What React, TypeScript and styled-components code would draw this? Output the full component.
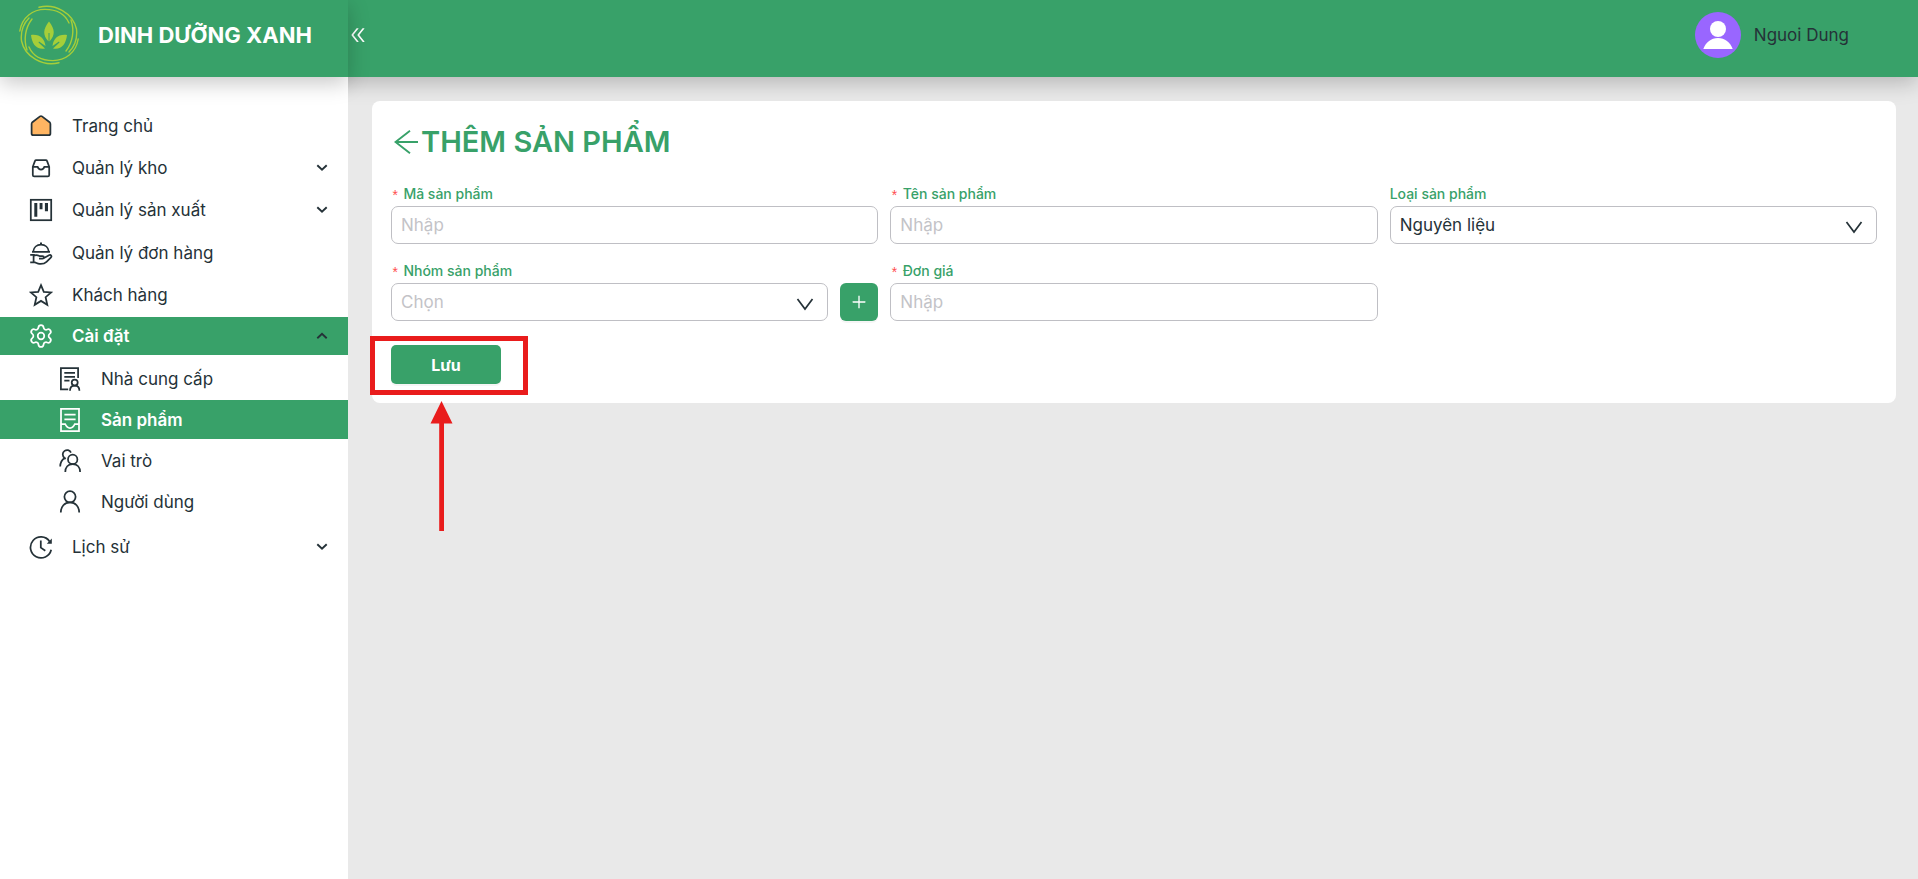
import React, { useState } from "react";
import styled, { createGlobalStyle } from "styled-components";
import { AiOutlineDoubleLeft, AiOutlinePlus } from "react-icons/ai";
import { Settings } from "lucide-react";

const green = "#38a169";
const ink = "#253238";

const GlobalStyle = createGlobalStyle`
  *, *::before, *::after { box-sizing: border-box; }
  body {
    margin: 0;
    background: #e9e9e9;
    color: ${ink};
    font-family: Inter, "Noto Sans", sans-serif;
    font-size: 17px;
    line-height: 24px;
  }
  button, input, select { font: inherit; color: inherit; }
`;

const headerShadow = "0 6px 20px 0 rgba(0, 0, 0, 0.22)";

const Shell = styled.div`
  display: grid;
  grid-template-columns: 348px minmax(0, 1fr);
  grid-template-rows: 77px 1fr;
  min-height: 100vh;
  overflow: hidden;
`;

const Brand = styled.div`
  grid-area: 1 / 1;
  z-index: 3;
  display: flex;
  align-items: center;
  gap: 19px;
  padding: 0 0 7px 19px;
  background: ${green};
  box-shadow: ${headerShadow};
`;

const BrandName = styled.span`
  color: #fff;
  font-size: 22px;
  font-weight: 700;
  white-space: nowrap;
`;

const TopBar = styled.header`
  grid-area: 1 / 1 / 2 / 3;
  z-index: 0;
  display: flex;
  align-items: center;
  justify-content: space-between;
  padding: 0 69px 7px 348px;
  background: ${green};
  box-shadow: ${headerShadow};
`;

const CollapseButton = styled.button`
  display: flex;
  padding: 0;
  border: 0;
  background: none;
  color: #fff;
  cursor: pointer;
`;

const Account = styled.button`
  display: flex;
  align-items: center;
  gap: 13px;
  padding: 0;
  border: 0;
  background: none;
  cursor: pointer;
`;

const Sidebar = styled.nav`
  grid-area: 2 / 1;
  z-index: 2;
  padding-top: 29px;
  background: #fff;
`;

const Menu = styled.ul`
  display: flex;
  flex-direction: column;
  gap: 3px;
  margin: 0;
  padding: 0;
  list-style: none;
`;

const SubMenu = styled(Menu)`
  gap: 2px;
  padding: 4px 0 3px;
`;

const MenuLink = styled.a<{ $active?: boolean; $tall?: boolean }>`
  display: flex;
  align-items: center;
  gap: 19px;
  height: ${(p) => (p.$tall ? 40 : 38)}px;
  padding: 0 20px 0 29px;
  background: ${(p) => (p.$active ? green : "transparent")};
  color: ${(p) => (p.$active ? "#fff" : ink)};
  font-weight: ${(p) => (p.$active ? 600 : 400)};
  text-decoration: none;
`;

const SubLink = styled(MenuLink)`
  height: 39px;
  padding-left: 58px;
`;

const MenuText = styled.span`
  flex: 1;
`;

const Main = styled.main`
  grid-area: 2 / 2;
  z-index: 1;
  padding: 24px 22px 24px 24px;
`;

const Card = styled.section`
  padding: 19px;
  border-radius: 8px;
  background: #fff;
`;

const TitleRow = styled.div`
  display: flex;
  align-items: center;
  gap: 3px;
  height: 44px;
  padding-left: 3px;
  color: ${green};
`;

const BackLink = styled.a`
  display: flex;
  color: inherit;
`;

const Title = styled.h1`
  margin: 0;
  font-size: 29px;
  font-weight: 600;
  line-height: 44px;
`;

const Fields = styled.div`
  display: grid;
  grid-template-columns: repeat(3, minmax(0, 1fr));
  align-items: start;
  gap: 15px 12px;
  margin: 18px 0 24px;
`;

const Label = styled.label<{ $required?: boolean }>`
  display: block;
  height: 24px;
  color: ${green};
  font-size: 14px;
  font-weight: 500;
  line-height: 24px;

  &::before {
    content: ${(p) => (p.$required ? '"*"' : "none")};
    margin-right: 4px;
    color: #ff4d4f;
    font-family: "Liberation Mono", monospace;
    font-weight: 400;
    line-height: 14px;
    vertical-align: -2px;
  }
`;

const TextInput = styled.input`
  display: block;
  width: 100%;
  height: 38px;
  padding: 0 9px;
  border: 1px solid #bfbfc4;
  border-radius: 7px;
  background: #fff;
  outline: none;

  &::placeholder {
    color: #c3c3c7;
    opacity: 1;
  }
`;

const SelectBox = styled.div`
  position: relative;
  flex: 1;

  svg {
    position: absolute;
    top: 15px;
    right: 14px;
    pointer-events: none;
  }
`;

const Select = styled.select<{ $empty?: boolean }>`
  display: block;
  width: 100%;
  height: 38px;
  padding: 0 40px 0 9px;
  border: 1px solid #bfbfc4;
  border-radius: 7px;
  background: #fff;
  color: ${(p) => (p.$empty ? "#c3c3c7" : ink)};
  appearance: none;
  outline: none;
`;

const Group = styled.div`
  display: flex;
  gap: 12px;
`;

const AddButton = styled.button`
  display: flex;
  align-items: center;
  justify-content: center;
  width: 38px;
  height: 38px;
  padding: 0;
  border: 0;
  border-radius: 6px;
  background: ${green};
  box-shadow: 0 2px 0 rgba(0, 0, 0, 0.04);
  color: #fff;
  cursor: pointer;
`;

const Actions = styled.div`
  position: relative;
  display: flex;
`;

const SaveButton = styled.button`
  width: 110px;
  height: 39px;
  padding: 0;
  border: 0;
  border-radius: 5px;
  background: ${green};
  box-shadow: 0 2px 0 rgba(0, 0, 0, 0.04);
  color: #fff;
  font-size: 16px;
  font-weight: 700;
  cursor: pointer;
`;

const Highlight = styled.div`
  position: absolute;
  top: -9px;
  left: -21px;
  width: 158px;
  height: 59px;
  border: 5px solid #e91c1c;
  pointer-events: none;
`;

const Pointer = styled.svg`
  position: absolute;
  top: 56px;
  left: 39px;
  pointer-events: none;
`;

const Stroke = ({ children }: { children: React.ReactNode }) => (
  <svg width="24" height="24" viewBox="0 0 24 24" fill="none" stroke="currentColor" strokeWidth="1.75" aria-hidden="true">
    {children}
  </svg>
);

const HomeIcon = () => (
  <Stroke>
    <path d="M11 2.4 3.4 8.2Q2.6 9 2.6 10V19.5Q2.6 21.2 4.3 21.2H19.7Q21.4 21.2 21.4 19.5V10Q21.4 9 20.6 8.2L13 2.4Q12 1.7 11 2.4Z" fill="#ffb562" />
  </Stroke>
);

const InboxIcon = () => (
  <Stroke>
    <path d="M3.8 10.8 6 4.9Q6.3 4 7.2 4H16.8Q17.7 4 18 4.9L20.2 10.8V19Q20.2 20.4 18.8 20.4H5.2Q3.8 20.4 3.8 19ZM3.8 10.8H8.6Q9.4 13.6 12 13.6T15.4 10.8H20.2" />
  </Stroke>
);

const BoardIcon = () => (
  <Stroke>
    <rect x="1.8" y="1.8" width="20.4" height="20.4" />
    <path d="M5.3 5H8.3V18.7H5.3ZM10.6 5H13.5V11.3H10.6ZM15.9 5H19V13.3H15.9Z" fill="currentColor" stroke="none" />
  </Stroke>
);

const ServeIcon = () => (
  <Stroke>
    <path d="M3 10.9H21M4.2 10.6C4.6 6.4 7.8 3.7 12 3.7S19.4 6.4 19.8 10.6M11 2.3H13" />
    <path d="M1.2 13.9H4.6V21.4H1.2M4.6 14.8C7 13.6 8.8 14.2 10.5 15H13.5C15.4 15 15.4 17.6 13.5 17.6H10M15 17 20 14.2C21.8 13.3 23.3 15.1 21.8 16.6L17.5 20.8C15.5 22.8 13 23.1 10.5 22.9C8 22.7 7 21.4 4.6 21.2" />
  </Stroke>
);

const StarIcon = () => (
  <Stroke>
    <path d="M12 2.2 14.8 8.9 22.2 9.4 16.6 14.2 18.3 21.8 12 17.9 5.7 21.8 7.4 14.2 1.8 9.4 9.2 8.9Z" />
  </Stroke>
);

const SupplierIcon = () => (
  <Stroke>
    <path d="M10.2 22.3H2.9V1.2H20.1V11M6.3 5.8H17M6.3 9.8H17M6.3 13.7H11.5" />
    <circle cx="16.7" cy="15.6" r="3" />
    <path d="M12 23.8C12 20.5 13.8 18.7 16.7 18.7S21.4 20.5 21.4 23.8" />
  </Stroke>
);

const ProductIcon = () => (
  <Stroke>
    <path d="M3 .9H21V23.1H3ZM6.4 6.6H17.6M6.4 11.3H17.6M3 16H7.2Q9 20 12 20T16.8 16H21" />
  </Stroke>
);

const RolesIcon = () => (
  <Stroke>
    <circle cx="14.7" cy="10.4" r="4.7" />
    <path d="M7.3 23C7.3 18.3 10 15.1 14.7 15.1S22.1 18.3 22.1 23M13 3.6C11.7 .9 8.7 .4 6.6 1.9C4 3.8 4.3 7.2 6.6 9.1C4 10.8 2.3 13 2.2 17.6M6.6 9.1 7.8 9.8" />
  </Stroke>
);

const UserIcon = () => (
  <Stroke>
    <circle cx="12" cy="6.8" r="5.6" />
    <path d="M2.8 22.6C2.8 16.5 6.5 12.4 12 12.4S21.2 16.5 21.2 22.6" />
  </Stroke>
);

const HistoryIcon = () => (
  <Stroke>
    <path d="M20.6 6.4A10.5 10.5 0 1 0 22.2 14.8M11.8 5.6V12.6L16.3 15.8" />
    <path d="M22.8 3.5V8.8H17.8Z" fill="currentColor" stroke="none" />
  </Stroke>
);

const Caret = ({ up }: { up?: boolean }) => (
  <svg width="12" height="8" viewBox="0 0 12 8" fill="none" stroke={ink} strokeWidth="1.9" aria-hidden="true">
    <path d={up ? "M1.3 6.2 6 1.7 10.7 6.2" : "M1.3 1.2 6 5.7 10.7 1.2"} />
  </svg>
);

const SelectArrow = () => (
  <svg width="18" height="13" viewBox="0 0 18 13" fill="none" stroke={ink} strokeWidth="1.7" aria-hidden="true">
    <path d="M1.5 1 9 11 16.5 1" />
  </svg>
);

const BackArrow = () => (
  <svg width="24" height="24" viewBox="0 0 24 24" fill="none" stroke="currentColor" strokeWidth="1.9" aria-hidden="true">
    <path d="M16 .8 1.5 12 16 23.2M1.5 12H24" />
  </svg>
);

const Logo = () => (
  <svg width="60" height="62" viewBox="0 0 60 62" fill="none" stroke="#a6ce39" aria-hidden="true">
    <g strokeWidth="1.4" strokeLinecap="round">
      <path d="M.8 27C3 13 14 5.400 26 5.400C37 5.400 46 10 50 19" />
      <path d="M20 3.300C36 -1 54 9 57.500 25C58.500 34 56 42 50 48" />
      <path d="M8 46C4.500 36 6 24 13 15" />
      <path d="M59.200 35C57 49 46 56.600 34 56.600C23 56.600 14 52 10 43" />
      <path d="M40 58.700C24 63 6 53 2.500 37C1.500 28 4 20 10 14" />
      <path d="M52 16C55.500 26 54 38 47 47" />
    </g>
    <g fill="#a6ce39" stroke="none">
      <path d="M30 17.500C36 25 36.500 31 30.500 37.500V29H29.500V37.500C23.500 31 24 25 30 17.500Z" />
      <path d="M12 31C21 30 25.500 34.500 26.500 42L20 37.500 19.500 38.500 26 44.500C17.500 46 13 40 12 31Z" />
      <path d="M48 31C39 30 34.500 34.500 33.500 42L40 37.500 40.500 38.500 34 44.500C42.500 46 47 40 48 31Z" />
    </g>
  </svg>
);

const Avatar = () => (
  <svg width="46" height="46" viewBox="0 0 46 46" aria-hidden="true">
    <circle cx="23" cy="23" r="23" fill="#9966ff" />
    <circle cx="23" cy="17" r="8" fill="#fff" />
    <path d="M8.3 37C11 30 16 26 23 26S35 30 37.7 37Z" fill="#fff" />
  </svg>
);

export default function App() {
  const [kind, setKind] = useState("material");
  const [group, setGroup] = useState("");

  return (
    <>
      <GlobalStyle />
      <Shell>
        <Brand>
          <Logo />
          <BrandName>DINH DƯỠNG XANH</BrandName>
        </Brand>
        <TopBar>
          <CollapseButton type="button" aria-label="Thu gọn menu">
            <AiOutlineDoubleLeft size={20} />
          </CollapseButton>
          <Account type="button">
            <Avatar />
            Nguoi Dung
          </Account>
        </TopBar>

        <Sidebar>
          <Menu>
            <li><MenuLink href="#home" $tall><HomeIcon /><MenuText>Trang chủ</MenuText></MenuLink></li>
            <li><MenuLink href="#warehouse"><InboxIcon /><MenuText>Quản lý kho</MenuText><Caret /></MenuLink></li>
            <li><MenuLink href="#production" $tall><BoardIcon /><MenuText>Quản lý sản xuất</MenuText><Caret /></MenuLink></li>
            <li><MenuLink href="#orders" $tall><ServeIcon /><MenuText>Quản lý đơn hàng</MenuText></MenuLink></li>
            <li><MenuLink href="#customers"><StarIcon /><MenuText>Khách hàng</MenuText></MenuLink></li>
            <li>
              <MenuLink href="#settings" $active>
                <Settings size={24} viewBox="1 1 22 22" strokeWidth={1.6} />
                <MenuText>Cài đặt</MenuText>
                <Caret up />
              </MenuLink>
              <SubMenu>
                <li><SubLink href="#suppliers"><SupplierIcon /><MenuText>Nhà cung cấp</MenuText></SubLink></li>
                <li><SubLink href="#products" $active aria-current="page"><ProductIcon /><MenuText>Sản phẩm</MenuText></SubLink></li>
                <li><SubLink href="#roles"><RolesIcon /><MenuText>Vai trò</MenuText></SubLink></li>
                <li><SubLink href="#users"><UserIcon /><MenuText>Người dùng</MenuText></SubLink></li>
              </SubMenu>
            </li>
            <li><MenuLink href="#history" $tall><HistoryIcon /><MenuText>Lịch sử</MenuText><Caret /></MenuLink></li>
          </Menu>
        </Sidebar>

        <Main>
          <Card>
            <TitleRow>
              <BackLink href="#products" aria-label="Quay lại"><BackArrow /></BackLink>
              <Title>THÊM SẢN PHẨM</Title>
            </TitleRow>
            <form onSubmit={(e) => e.preventDefault()}>
              <Fields>
                <div>
                  <Label htmlFor="code" $required>Mã sản phẩm</Label>
                  <TextInput id="code" placeholder="Nhập" />
                </div>
                <div>
                  <Label htmlFor="name" $required>Tên sản phẩm</Label>
                  <TextInput id="name" placeholder="Nhập" />
                </div>
                <div>
                  <Label htmlFor="kind">Loại sản phẩm</Label>
                  <SelectBox>
                    <Select id="kind" value={kind} onChange={(e) => setKind(e.target.value)}>
                      <option value="material">Nguyên liệu</option>
                    </Select>
                    <SelectArrow />
                  </SelectBox>
                </div>
                <div>
                  <Label htmlFor="group" $required>Nhóm sản phẩm</Label>
                  <Group>
                    <SelectBox>
                      <Select id="group" $empty={!group} value={group} onChange={(e) => setGroup(e.target.value)}>
                        <option value="">Chọn</option>
                      </Select>
                      <SelectArrow />
                    </SelectBox>
                    <AddButton type="button" aria-label="Thêm nhóm">
                      <AiOutlinePlus size={18} />
                    </AddButton>
                  </Group>
                </div>
                <div>
                  <Label htmlFor="price" $required>Đơn giá</Label>
                  <TextInput id="price" placeholder="Nhập" />
                </div>
              </Fields>
              <Actions>
                <SaveButton type="submit">Lưu</SaveButton>
                <Highlight />
                <Pointer width="24" height="130" viewBox="0 0 24 130" aria-hidden="true">
                  <path d="M11.5 0 22.5 22.5H14V130H9.2V22.5H.5Z" fill="#e91c1c" />
                </Pointer>
              </Actions>
            </form>
          </Card>
        </Main>
      </Shell>
    </>
  );
}
